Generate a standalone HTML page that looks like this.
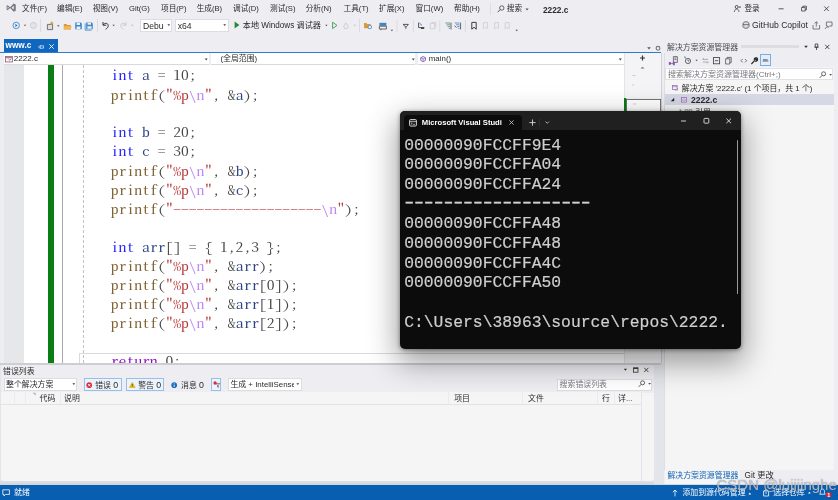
<!DOCTYPE html>
<html lang="zh-CN">
<head>
<meta charset="utf-8">
<title>2222.c - Microsoft Visual Studio</title>
<style>
*{box-sizing:border-box;margin:0;padding:0}
html,body{width:838px;height:500px;overflow:hidden;background:#eeeef2}
body{position:relative;font-family:"Liberation Sans","Noto Sans CJK SC",sans-serif;font-size:7.9px;color:#2b2b2b;line-height:1}
#root{position:absolute;left:-3px;top:-3px;width:844px;height:506px;overflow:hidden;background:#eeeef2;filter:blur(.38px)}
#in{position:absolute;left:3px;top:3px;width:838px;height:500px}
.a{position:absolute;white-space:nowrap}
.t{position:absolute;white-space:nowrap;line-height:12px;height:12px}
svg{position:absolute;overflow:visible}
/* code */
#code{position:absolute;left:110.8px;top:65.8px;transform:scaleY(.8);transform-origin:0 0;font-family:"Noto Serif CJK SC","Liberation Serif",serif;font-feature-settings:"hwid";font-size:15.6px;line-height:23.81px;color:#444;white-space:pre}
#code .k{color:#2222ff}
#code .f{color:#806232}
#code .s{color:#b83838}
#code .e{color:#bd88f6}
#code .v{color:#2c4484}
#code .r{color:#8f08c4}
/* console */
#con{position:absolute;left:400px;top:110.5px;width:340.5px;height:238px;background:#0c0c0c;border-radius:5px;box-shadow:0 11px 30px 3px rgba(0,0,0,.38),0 1px 4px rgba(0,0,0,.45);overflow:hidden}
#con pre{position:absolute;left:4.2px;top:25.3px;-webkit-text-stroke:.18px #cfcfcf;font-family:"Liberation Mono","DejaVu Sans Mono",monospace;font-size:16.35px;line-height:19.65px;color:#cfcfcf;white-space:pre}
#menubar .t{font-size:7.65px}
#con .d{display:inline-block;transform:scaleX(1.47);transform-origin:0 50%;letter-spacing:-3.137px;position:relative;top:-1.6px;left:-2.3px;-webkit-text-stroke:.5px #cfcfcf}
</style>
</head>
<body>
<div id="root"><div id="in">

<!-- MENUBAR -->
<div id="menubar">
 <svg style="left:5.6px;top:3px" width="10.4" height="9.4" viewBox="0 0 10.4 9.4"><path d="M.6 2.6L1.6 2.2 4.2 4.3 7.6 .6 9.8 1.6V7.8L7.6 8.8 4.2 5.1 1.6 7.2 .6 6.8zM1.6 3.6v2.2l1.3-1.1zM5.6 4.7l2.2 1.9V2.8z" fill="#7b7b86" fill-rule="evenodd"/></svg>
 <div class="t" style="left:22px;top:3.3px">文件(F)</div>
 <div class="t" style="left:57px;top:3.3px">编辑(E)</div>
 <div class="t" style="left:92.7px;top:3.3px">视图(V)</div>
 <div class="t" style="left:129px;top:3.3px">Git(G)</div>
 <div class="t" style="left:161px;top:3.3px">项目(P)</div>
 <div class="t" style="left:196.7px;top:3.3px">生成(B)</div>
 <div class="t" style="left:233px;top:3.3px">调试(D)</div>
 <div class="t" style="left:270px;top:3.3px">测试(S)</div>
 <div class="t" style="left:305.7px;top:3.3px">分析(N)</div>
 <div class="t" style="left:343.6px;top:3.3px">工具(T)</div>
 <div class="t" style="left:379px;top:3.3px">扩展(X)</div>
 <div class="t" style="left:415.6px;top:3.3px">窗口(W)</div>
 <div class="t" style="left:454px;top:3.3px">帮助(H)</div>
 <div class="a" style="left:490.4px;top:3.4px;width:1px;height:11.6px;background:#dcdce2"></div>
 <svg style="left:496.5px;top:5px" width="8" height="8" viewBox="0 0 8 8"><circle cx="4.8" cy="3" r="2.2" fill="none" stroke="#444" stroke-width=".8"/><path d="M3.2 4.6L.6 7.2" stroke="#444" stroke-width=".9"/></svg>
 <div class="t" style="left:506.8px;top:3.3px">搜索</div>
 <svg style="left:524.8px;top:8px" width="4" height="3" viewBox="0 0 4 3"><path d="M.4 .4h3.2L2 2.4z" fill="#555"/></svg>
 <div class="t" style="left:543px;top:3.8px;font-weight:bold;font-size:8.3px">2222.c</div>
 <svg style="left:734.4px;top:4.6px" width="7" height="7.6" viewBox="0 0 7 7.6"><circle cx="2.7" cy="2" r="1.5" fill="none" stroke="#333" stroke-width=".8"/><path d="M.4 7c0-2 1-2.9 2.3-2.9S5 5 5 7M5.2 1.4l1.4 1.4M6.6 1.4L5.2 2.8" fill="none" stroke="#333" stroke-width=".7"/></svg>
 <div class="t" style="left:744.4px;top:3.3px">登录</div>
 <svg style="left:776px;top:4px" width="56" height="10" viewBox="0 0 56 10"><path d="M2.6 4.8h5" stroke="#333" stroke-width=".8"/><path d="M25.6 3.4h3.6v3.6h-3.6zM26.8 3.4V2.2h3.6v3.6h-1.2" fill="none" stroke="#333" stroke-width=".75"/><path d="M48.2 2.4l4.6 4.6M52.8 2.4l-4.6 4.6" stroke="#333" stroke-width=".8" fill="none"/></svg>
</div>

<!-- TOOLBAR -->
<div id="toolbar">
 <!-- nav back / forward -->
 <svg style="left:11px;top:20px" width="30" height="11" viewBox="0 0 30 11"><circle cx="5.2" cy="5.4" r="3.2" fill="#e9f2fb" stroke="#3f86c7" stroke-width=".9"/><path d="M4.4 3.8l2.2 1.6-2.2 1.6z" fill="#2f6fae"/><path d="M12.8 4.8h2.4l-1.2 1.5z" fill="#555"/><circle cx="22.4" cy="5.4" r="3" fill="#e4e4e8" stroke="#c4c4ca" stroke-width=".8"/></svg>
 <div class="a" style="left:40.4px;top:19.4px;width:1px;height:12.4px;background:#dadae0"></div>
 <!-- new, open, save, save all -->
 <svg style="left:45px;top:19.6px" width="52" height="12" viewBox="0 0 52 12"><path d="M2.4 4.4h5.2v5.2H2.4z" fill="#ddd" stroke="#666" stroke-width=".9"/><path d="M6.8 1l.7 1.5 1.5.6-1.5.7-.7 1.5-.7-1.5-1.5-.7 1.5-.6z" fill="#c8a51a"/><path d="M12 5.2h2.6l-1.3 1.6z" fill="#555"/><path d="M18.8 4h2.6l.8.9h3.6v4.5h-7z" fill="#dc9a3c"/><path d="M19.4 6.2h7.2l-1 3.2h-6.8z" fill="#f0b85c"/><path d="M30.2 2.4h5.6l1 1v5.8h-6.6z" fill="#3f86c7"/><path d="M31.6 2.8h3.4v2.2h-3.4zM31.6 6.6h3.8v2.4h-3.8z" fill="#e9f2fb"/><path d="M41.2 2.4h5.6l1 1v5.8h-6.6z" fill="#3f86c7"/><path d="M42.6 2.8h3.4v2h-3.4zM42.4 6.2h4.2v2.6h-4.2z" fill="#e9f2fb"/><path d="M40.2 3.4v6.8h6.4" fill="none" stroke="#3f86c7" stroke-width=".8"/></svg>
 <div class="a" style="left:96.6px;top:19.4px;width:1px;height:12.4px;background:#dadae0"></div>
 <!-- undo / redo -->
 <svg style="left:100px;top:20px" width="36" height="11" viewBox="0 0 36 11"><path d="M3 2v3.2h3.2M3.2 5c1-2 4.6-2.6 5 .4.2 1.800-1.200 3-2.600 3.800" fill="none" stroke="#333" stroke-width="1"/><path d="M12.400 4.800h2.400l-1.200 1.500z" fill="#555"/><path d="M26 2v3.200h-3.200M25.800 5c-1-2-4.600-2.600-5 .4-.2 1.800 1.200 3 2.600 3.800" fill="none" stroke="#c9c9cf" stroke-width="1"/><path d="M31 4.800h2.400l-1.200 1.500z" fill="#b9b9c0"/></svg>
 <!-- combos -->
 <div class="a" style="left:140.400px;top:19.400px;width:31.800px;height:12.800px;background:#fff;border:1px solid #dcdce2"></div>
 <div class="t" style="left:143px;top:19.800px;font-size:8.600px;width:21.200px;overflow:hidden">Debug</div>
 <div class="a" style="left:175px;top:19.400px;width:53.600px;height:12.800px;background:#fff;border:1px solid #dcdce2"></div>
 <div class="t" style="left:177.800px;top:19.800px;font-size:8.600px">x64</div>
 <svg style="left:166px;top:24.400px" width="62" height="3" viewBox="0 0 62 3"><path d="M1.400 .3h2.800l-1.400 1.800zM57.300 .3h2.800l-1.400 1.800z" fill="#444"/></svg>
 <!-- start -->
 <svg style="left:233.800px;top:21.400px" width="6" height="8" viewBox="0 0 6 8"><path d="M.6 .6l4.800 3.400-4.800 3.400z" fill="#1f8a3b"/></svg>
 <div class="t" style="left:242.800px;top:19.600px;font-size:8.150px">本地 Windows 调试器</div>
 <svg style="left:323.600px;top:20px" width="36" height="11" viewBox="0 0 36 11"><path d="M1.200 4.800h2.400l-1.200 1.500z" fill="#555"/><path d="M8.600 2.200l4.400 3.200-4.400 3.200z" fill="none" stroke="#3c9a55" stroke-width=".9"/><path d="M22 8.600c-1.800 0-2.600-1.400-2-2.800.4-.9 1.400-1.200 1.400-2.600 1.400.6 2.600 2 2.600 3.400 0 1.200-.8 2-2 2z" fill="none" stroke="#c2c2c8" stroke-width=".9"/><path d="M29.500 4.800h2.400l-1.200 1.500z" fill="#b9b9c0"/></svg>
 <div class="a" style="left:359.400px;top:19.400px;width:1px;height:12.400px;background:#dadae0"></div>
 <svg style="left:362px;top:19.600px" width="160" height="14" viewBox="0 0 160 14"><path d="M2 3h2.400l.8.900h3.400v4.400H2z" fill="#dc9a3c"/><circle cx="7.800" cy="7" r="1.800" fill="#eef" stroke="#3f86c7" stroke-width=".8"/><path d="M17.400 2.800h7v3h-7z" fill="#3f86c7"/><path d="M17.400 6.200h7v2.800h-7zM19 9v1.200" fill="none" stroke="#444" stroke-width=".8"/><path d="M28.600 9.800h2.600l-1.300 1.500z" fill="#555"/><path d="M35 0v12.400" stroke="#dadae0" stroke-width="1"/><path d="M41 4.400h5.600M41.800 4.400c0 3 4 3 4 0M43.800 6.800v2" fill="none" stroke="#444" stroke-width=".9"/><path d="M51.400 0v12.400" stroke="#dadae0" stroke-width="1"/><path d="M56.600 2.600v5h5.600" fill="none" stroke="#444" stroke-width=".9"/><path d="M57.400 3l2.600 2.400" stroke="#3f86c7" stroke-width="1"/><path d="M59 7.200h3.200v1.800h-3.200z" fill="#444"/><path d="M68.200 3.400h4.400v5.400h-4.400zM69.400 2.400h4.400v5.400" fill="none" stroke="#c9c9cf" stroke-width=".8"/><path d="M77.800 0v12.400" stroke="#dadae0" stroke-width="1"/><path d="M83.400 3h4.800M84.600 4.800h3.600M85.600 6.600h2.600M86.800 8.400h1.400" stroke="#4a8a7a" stroke-width=".8"/><path d="M89 2.600v6.800" stroke="#444" stroke-width=".8"/><path d="M92.800 3h4.800M94 4.800h3.600M95 6.600h2.600M96.200 8.400h1.400" stroke="#3f86c7" stroke-width=".8"/><path d="M98.600 2.600v6.800M92.600 5.600l1.800 2" stroke="#444" stroke-width=".8"/><path d="M103.400 0v12.400" stroke="#dadae0" stroke-width="1"/><path d="M109.800 2.400h4.400v6.800l-2.200-1.900-2.200 1.900z" fill="none" stroke="#333" stroke-width=".95"/><path d="M121.400 2.600h4v6.200l-2-1.700-2 1.700zM132.600 2.600h4v6.200l-2-1.700-2 1.700zM143.200 2.600h4v6.200l-2-1.700-2 1.700z" fill="none" stroke="#cfcfd5" stroke-width=".9"/><path d="M153.400 9.800h2.600l-1.300 1.500z" fill="#555"/></svg>
 <!-- copilot -->
 <svg style="left:741.600px;top:21px" width="8" height="8" viewBox="0 0 8 8"><path d="M1 3.200c0-1.600 1.200-2.400 3-2.400s3 .8 3 2.400v2.200c0 1-1.400 1.800-3 1.800s-3-.8-3-1.800z" fill="none" stroke="#444" stroke-width=".8"/><path d="M2.800 4.400v1M5.200 4.400v1M1 3.400h6" stroke="#444" stroke-width=".7"/></svg>
 <div class="t" style="left:752px;top:19.200px;font-size:8.600px">GitHub Copilot</div>
 <svg style="left:811.600px;top:20.600px" width="22" height="9" viewBox="0 0 22 9"><path d="M1 4v4h6.600V4M4.300 5.600V.8M2.600 2.400L4.300 .8 6 2.400" fill="none" stroke="#555" stroke-width=".75"/><path d="M14.400 1h5.600v4h-2.400l-1.800 1.600V5h-1.400z" fill="none" stroke="#555" stroke-width=".75"/><path d="M13.400 8c0-1.200.6-1.800 1.600-1.800" fill="none" stroke="#555" stroke-width=".7"/></svg>
</div>

<!-- EDITOR -->
<div id="editor">
 <!-- tab -->
 <div class="a" style="left:3.8px;top:39.3px;width:54.2px;height:13.4px;background:#1067bf"></div>
 <div class="t" style="left:5.6px;top:40.4px;color:#fff;font-weight:bold;font-size:8.2px">www.c</div>
 <svg style="left:37.5px;top:43.5px" width="6" height="6" viewBox="0 0 6 6"><path d="M0 3h2.2M2.2 1v4M2.2 1.8h3.3v2.4h-3.3" fill="none" stroke="#cfe3f7" stroke-width=".8"/></svg>
 <svg style="left:48.5px;top:43.8px" width="5" height="5" viewBox="0 0 5 5"><path d="M.3 .3l4.4 4.4M4.7 .3L.3 4.7" stroke="#fff" stroke-width=".9" fill="none"/></svg>
 <svg style="left:646px;top:45.5px" width="16" height="5" viewBox="0 0 16 5"><path d="M1.2 1.2h3.6l-1.8 2.2z" fill="#555"/><circle cx="12" cy="2.3" r="1.9" fill="none" stroke="#777" stroke-width="1.1"/></svg>
 <!-- blue line -->
 <div class="a" style="left:-3px;top:52.2px;width:664px;height:1px;background:#2b7bd0"></div>
 <!-- nav bar -->
 <div class="a" style="left:3.8px;top:53.2px;width:620.2px;height:11.6px;background:#fff;border-bottom:1px solid #d8d8de"></div>
 <div class="a" style="left:208.6px;top:53.2px;width:2.6px;height:11.6px;background:#eeeef2"></div>
 <div class="a" style="left:415.4px;top:53.2px;width:2.6px;height:11.6px;background:#eeeef2"></div>
 <svg style="left:5px;top:56.2px" width="8" height="6.4" viewBox="0 0 8 6.4"><rect x=".4" y=".4" width="7.2" height="5.6" fill="#fbeff4" stroke="#8d5a7a" stroke-width=".8"/><path d="M1 1.7h6" stroke="#8d5a7a" stroke-width=".9"/><path d="M3.6 3.2l1.2 1 1.4-1.4" stroke="#555" stroke-width=".7" fill="none"/></svg>
 <div class="t" style="left:13.8px;top:53.3px;font-size:8.05px">2222.c</div>
 <div class="t" style="left:220.4px;top:53.3px;font-size:7.9px">(全局范围)</div>
 <svg style="left:419.8px;top:56px" width="6.2" height="6.2" viewBox="0 0 6.5 6.5"><path d="M3.25 .5l2.5 1.3v2.9l-2.5 1.3-2.5-1.3v-2.9z" fill="#f3eafa" stroke="#7a4aa8" stroke-width=".8"/><path d="M.9 1.9l2.35 1.2 2.35-1.2M3.25 3.1v2.7" stroke="#7a4aa8" stroke-width=".6" fill="none"/></svg>
 <div class="t" style="left:428.8px;top:53.3px;font-size:7.9px">main()</div>
 <svg style="left:0;top:58px" width="630" height="4" viewBox="0 0 630 4"><path d="M204.7 .6h3l-1.5 1.8zM411.8 .6h3l-1.5 1.8zM618.8 .6h3l-1.5 1.8z" fill="#444"/></svg>
 <!-- editor body -->
 <div class="a" style="left:3.6px;top:65px;width:657.6px;height:297.9px;background:#fff"></div>
 <div class="a" style="left:3.6px;top:65px;width:20.2px;height:297.9px;background:#e6e7e8"></div>
 <div class="a" style="left:48.4px;top:65px;width:5.6px;height:297.9px;background:#0a7d14"></div>
 <div class="a" style="left:62.2px;top:65px;width:1px;height:297.9px;background:#a9a9ad"></div>
 <div class="a" style="left:82.8px;top:65px;width:0;height:297.9px;border-left:1px dashed #c2c2c6"></div>
 <div class="a" style="left:78.6px;top:352.8px;width:545.4px;height:10.1px;border:1.3px solid #dadade;border-right:0;border-bottom:0"></div>
 <!-- scrollbar (map mode) -->
 <div class="a" style="left:624px;top:53.2px;width:37.2px;height:309.7px;background:#f4f4f6;border-left:1px solid #e4e4e8"></div>
 <div class="a" style="left:660.6px;top:53.2px;width:1px;height:309.7px;background:#cfcfd6"></div>
 <svg style="left:624px;top:53px" width="37" height="60" viewBox="0 0 37 60"><path d="M16 5h5M18.5 2.5v5" stroke="#333" stroke-width="1.2"/><path d="M16.5 15.6l2-1.8 2 1.8z" fill="#777"/><rect x="2.4" y="46.4" width="34.2" height="20" fill="#fff" stroke="#5e5e62" stroke-width=".9"/><rect x="0" y="45" width="2.2" height="21" fill="#0a7d14"/><path d="M8.4 22.6h3M8 32h2.2M9 51h3" stroke="#c4b4ba" stroke-width=".7"/></svg>
 <pre id="code"><span class="k">int</span> <span class="v">a</span> = 10;
<span class="f">printf</span>(<span class="s">"%p<span class="e">\n</span>"</span>, &amp;<span class="v">a</span>);

<span class="k">int</span> <span class="v">b</span> = 20;
<span class="k">int</span> <span class="v">c</span> = 30;
<span class="f">printf</span>(<span class="s">"%p<span class="e">\n</span>"</span>, &amp;<span class="v">b</span>);
<span class="f">printf</span>(<span class="s">"%p<span class="e">\n</span>"</span>, &amp;<span class="v">c</span>);
<span class="f">printf</span>(<span class="s">"-------------------<span class="e">\n</span>"</span>);

<span class="k">int</span> <span class="v">arr</span>[] = { 1,2,3 };
<span class="f">printf</span>(<span class="s">"%p<span class="e">\n</span>"</span>, &amp;<span class="v">arr</span>);
<span class="f">printf</span>(<span class="s">"%p<span class="e">\n</span>"</span>, &amp;<span class="v">arr</span>[0]);
<span class="f">printf</span>(<span class="s">"%p<span class="e">\n</span>"</span>, &amp;<span class="v">arr</span>[1]);
<span class="f">printf</span>(<span class="s">"%p<span class="e">\n</span>"</span>, &amp;<span class="v">arr</span>[2]);

<span class="r">return</span> 0;</pre>
</div>

<!-- SOLUTION EXPLORER -->
<div id="solexp">
 <div class="a" style="left:664.200px;top:40px;width:170px;height:443.600px;background:#f5f5f5;border-radius:3.500px 3.500px 0 0;border-left:1px solid #dedee4"></div>
 <div class="a" style="left:664.200px;top:40px;width:170px;height:13.400px;background:#eeeef2;border-radius:3.500px 3.500px 0 0"></div>
 <div class="t" style="left:667px;top:41.500px;color:#4a4a4e">解决方案资源管理器</div>
 <div class="a" style="left:741px;top:45px;width:58px;height:2.600px;background:#dcdce2"></div>
 <svg style="left:803px;top:42.600px" width="28" height="8" viewBox="0 0 28 8"><path d="M1.200 2.800h3.600l-1.800 2.200z" fill="#333"/><path d="M12.200 1h2.600v3.200h-2.600zM11.400 4.200h4.200M13.500 4.200v2.800" fill="none" stroke="#333" stroke-width=".8"/><path d="M22.200 1.800l4.200 4.200M26.400 1.800l-4.200 4.200" stroke="#333" stroke-width=".85" fill="none"/></svg>
 <!-- toolbar -->
 <div class="a" style="left:665px;top:53.400px;width:169px;height:14px;background:#eeeef2"></div>
 <div class="a" style="left:760px;top:54px;width:11.200px;height:12.400px;background:#e4eefa;border:1px solid #78aee6"></div>
 <svg style="left:668px;top:54.600px" width="106" height="11" viewBox="0 0 106 11"><path d="M5.400 1.600h4v5.800h-4zM6.400 3h2M6.400 4.600h2" fill="none" stroke="#555" stroke-width=".8"/><path d="M.8 7.400L2 6.800l2 1.600 1.800-2 1 .5v3l-1 .5-1.800-2-2 1.600-1.200-.6z" fill="#8a4fb5"/><circle cx="20" cy="6" r="2.600" fill="none" stroke="#444" stroke-width=".8"/><path d="M20 4.600V6h1.300M16.600 2.400l1.400 1" stroke="#444" stroke-width=".7" fill="none"/><path d="M16.200 1.400l1.800.3-1.200 1.300z" fill="#3f86c7"/><path d="M27.400 4.800h2.400l-1.200 1.500z" fill="#555"/><path d="M34.600 4.400h5.400M34.600 4.400l1.400-1.400M40.400 7h-5.400M40.400 7l-1.400 1.400" stroke="#9a9aa2" stroke-width=".8" fill="none"/><rect x="45.400" y="2.600" width="6.200" height="6.200" fill="none" stroke="#444" stroke-width=".85"/><path d="M46.800 5.700h3.400" stroke="#444" stroke-width=".85"/><path d="M57.600 3.800h4.200v5.200h-4.200zM59 3.800V2.400h4.200v5.200h-1.400" fill="none" stroke="#555" stroke-width=".8"/><path d="M74.600 4l-1.600 1.700 1.600 1.700M77 4l1.600 1.700-1.600 1.700" stroke="#555" stroke-width=".8" fill="none"/><path d="M83.400 9l3.400-3.600M86.400 5.400c-.6-1.400.4-3 2.200-2.600l-1.200 1.300.9.900 1.300-1.200c.4 1.800-1.200 2.800-2.600 2.200" stroke="#222" stroke-width="1.100" fill="none"/><path d="M94.600 6h5.800M95 4.800h4.600" stroke="#555" stroke-width=".9"/></svg>
 <!-- search -->
 <div class="a" style="left:665.400px;top:68.200px;width:167.400px;height:12px;background:#fff;border:1px solid #e0e0e6"></div>
 <div class="t" style="left:668px;top:68.600px;color:#77777d;font-size:8px">搜索解决方案资源管理器(Ctrl+;)</div>
 <svg style="left:818.600px;top:70.600px" width="14" height="8" viewBox="0 0 14 8"><circle cx="4.600" cy="2.800" r="2" fill="none" stroke="#444" stroke-width=".8"/><path d="M3.200 4.300L.8 6.800" stroke="#444" stroke-width=".9"/><path d="M10.200 3h2.800l-1.400 1.700z" fill="#555"/></svg>
 <!-- tree -->
 <svg style="left:672.400px;top:84.600px" width="6" height="6" viewBox="0 0 8 8"><rect x=".8" y=".8" width="6" height="5.400" fill="#f6effa" stroke="#8a62a8" stroke-width=".9"/><path d="M.8 2.200h6" stroke="#8a62a8" stroke-width=".8"/><path d="M3.600 6.800h3.800v-3" fill="none" stroke="#777" stroke-width=".7"/></svg>
 <div class="t" style="left:681.800px;top:82.600px">解决方案 '2222.c' (1 个项目，共 1 个)</div>
 <div class="a" style="left:665.200px;top:94px;width:169px;height:11px;background:#d6d8e6"></div>
 <svg style="left:669.600px;top:97.400px" width="5" height="5" viewBox="0 0 5 5"><path d="M4.200 .8v3.400H.8z" fill="#222"/></svg>
 <svg style="left:681px;top:96.600px" width="6" height="6" viewBox="0 0 8 8"><rect x=".8" y=".8" width="6.400" height="6" fill="#f6effa" stroke="#8a62a8" stroke-width=".9"/><path d="M2.400 2.600h3.200v2.600h-3.200z" fill="none" stroke="#8a62a8" stroke-width=".7"/></svg>
 <div class="t" style="left:691px;top:93.600px;font-weight:bold;font-size:8.600px">2222.c</div>
 <svg style="left:678.600px;top:109.400px" width="14" height="6" viewBox="0 0 14 6"><path d="M1 .6l2.600 2.400-2.600 2.400z" fill="none" stroke="#555" stroke-width=".7"/><path d="M6 .800h2.800v2.800h-2.800zM10 .800h2.800v2.800h-2.800z" fill="none" stroke="#666" stroke-width=".7"/></svg>
 <div class="t" style="left:695px;top:107.200px">引用</div>
 <!-- bottom tabs -->
 <div class="a" style="left:664.200px;top:469.600px;width:170px;height:14px;background:#eeeef2"></div>
 <div class="a" style="left:665.200px;top:469.600px;width:75px;height:14px;background:#f5f5f5"></div>
 <div class="t" style="left:667.400px;top:470.400px;color:#0f62b5">解决方案资源管理器</div>
 <div class="t" style="left:744.600px;top:470.400px;font-size:8.200px">Git 更改</div>
</div>

<!-- ERROR LIST -->
<div id="errlist">
 <div class="a" style="left:-3px;top:362.900px;width:667px;height:122.600px;background:#e3e5ea"></div>
 <div class="a" style="left:-3px;top:362.900px;width:664px;height:1.700px;background:#cdcdd2"></div>
 <div class="a" style="left:1.400px;top:364.600px;width:652.200px;height:116.800px;background:#f5f5f5;border-radius:3.500px"></div>
 <div class="a" style="left:1.400px;top:364.600px;width:652.200px;height:28px;background:#eeeef2;border-radius:3.500px 3.500px 0 0"></div>
 <div class="t" style="left:3px;top:366px">错误列表</div>
 <svg style="left:621px;top:366px" width="30" height="8" viewBox="0 0 30 8"><path d="M2.800 2.800h3.200l-1.600 2z" fill="#333"/><rect x="12.400" y="1.800" width="4.600" height="4.400" fill="none" stroke="#333" stroke-width=".8"/><path d="M12.400 2.400h4.600" stroke="#333" stroke-width="1"/><path d="M23.200 1.800l4.200 4.200M27.400 1.800l-4.200 4.200" stroke="#333" stroke-width=".85" fill="none"/></svg>
 <!-- toolbar -->
 <div class="a" style="left:3.800px;top:377.600px;width:73.600px;height:13.200px;background:#fff;border:1px solid #dcdce2"></div>
 <div class="t" style="left:6px;top:379.400px">整个解决方案</div>
 <svg style="left:72.200px;top:383px" width="4" height="3" viewBox="0 0 4 3"><path d="M.4 .3h2.800l-1.400 1.800z" fill="#444"/></svg>
 <div class="a" style="left:84px;top:377.600px;width:37.600px;height:13.200px;background:#edf3fb;border:1px solid #96bfea"></div>
 <svg style="left:85.500px;top:381.700px" width="6.400" height="6.400" viewBox="0 0 7 7"><circle cx="3.500" cy="3.500" r="3.100" fill="#d8303c"/><path d="M2.200 2.200l2.600 2.600M4.800 2.200L2.200 4.800" stroke="#fff" stroke-width=".9"/></svg>
 <div class="t" style="left:95.200px;top:379.400px">错误 <span style="font-size:8.8px">0</span></div>
 <div class="a" style="left:126px;top:377.600px;width:38.400px;height:13.200px;background:#edf3fb;border:1px solid #96bfea"></div>
 <svg style="left:128.800px;top:382px" width="6.600" height="5.800" viewBox="0 0 8 7"><path d="M4 .4l3.600 6.200H.4z" fill="#f2c21a" stroke="#b8900c" stroke-width=".5"/><path d="M4 2.400v2.200M4 5.200v.7" stroke="#222" stroke-width=".8"/></svg>
 <div class="t" style="left:138.200px;top:379.400px">警告 <span style="font-size:8.8px">0</span></div>
 <svg style="left:170.900px;top:381.700px" width="6.400" height="6.400" viewBox="0 0 7 7"><circle cx="3.500" cy="3.500" r="3.100" fill="#1b6fc0"/><path d="M3.500 3v2.400M3.500 1.600v.8" stroke="#fff" stroke-width=".9"/></svg>
 <div class="t" style="left:181px;top:379.400px">消息 <span style="font-size:8.8px">0</span></div>
 <div class="a" style="left:211.300px;top:377.800px;width:10px;height:13px;background:#edf3fb;border:1px solid #96bfea"></div>
 <svg style="left:212.800px;top:380.800px" width="7.400" height="7.400" viewBox="0 0 8 8"><circle cx="2.200" cy="2.200" r="1.800" fill="#d8303c"/><path d="M3.400 2.600h4l-1.600 2v2.400l-.9-.6V4.600z" fill="none" stroke="#555" stroke-width=".7"/></svg>
 <div class="a" style="left:227.800px;top:377.600px;width:74px;height:13.200px;background:#fff;border:1px solid #dcdce2"></div>
 <div class="t" style="left:230.400px;top:379.400px;width:63.200px;overflow:hidden">生成 + IntelliSense</div>
 <svg style="left:296.400px;top:383px" width="4" height="3" viewBox="0 0 4 3"><path d="M.4 .3h2.800l-1.400 1.800z" fill="#444"/></svg>
 <div class="a" style="left:557px;top:379.400px;width:95.400px;height:12px;background:#fff;border:1px solid #dcdce2"></div>
 <div class="t" style="left:559.600px;top:379.400px;color:#7a7a80">搜索错误列表</div>
 <svg style="left:638.200px;top:380.400px" width="14" height="8" viewBox="0 0 14 8"><circle cx="4.600" cy="2.800" r="2" fill="none" stroke="#444" stroke-width=".8"/><path d="M3.200 4.300L.8 6.800" stroke="#444" stroke-width=".9"/><path d="M10.200 3h2.800l-1.400 1.700z" fill="#555"/></svg>
 <!-- header -->
 <div class="a" style="left:1.400px;top:392.400px;width:640px;height:12.400px;background:#f5f5f5;border-bottom:1px solid #e2e2e8"></div>
 <div class="a" style="left:641.400px;top:392.400px;width:1px;height:89px;background:#e4e4ea"></div>
 <svg style="left:0;top:392.400px" width="660" height="12" viewBox="0 0 660 12"><path d="M14.500 0v12M25.500 0v12M60.500 0v12M448.500 0v12M522.500 0v12M597.500 0v12M614.500 0v12" stroke="#ebebef" stroke-width="1"/><path d="M32.600 .8h3v3z" fill="#b4b4bc"/></svg>
 <div class="t" style="left:39.600px;top:392.900px">代码</div>
 <div class="t" style="left:64px;top:392.900px">说明</div>
 <div class="t" style="left:454.200px;top:392.900px">项目</div>
 <div class="t" style="left:528px;top:392.900px">文件</div>
 <div class="t" style="left:602px;top:392.900px">行</div>
 <div class="t" style="left:618px;top:392.900px">详...</div>
</div>

<!-- STATUS BAR -->
<div id="status">
 <div class="a" style="left:-3px;top:485.400px;width:844px;height:17.600px;background:#085eb1"></div>
 <div class="a" style="left:-3px;top:481.400px;width:657px;height:4px;background:linear-gradient(#dfe1e6,#d0d4d9)"></div>
 <div class="a" style="left:654px;top:483.600px;width:187px;height:1.800px;background:#d6d9de"></div>
 <svg style="left:2px;top:488.600px" width="9" height="8" viewBox="0 0 9 8"><path d="M.8 .8h6.600v4.600H3.600L2 7V5.400H.8z" fill="none" stroke="#fff" stroke-width=".8"/></svg>
 <div class="t" style="left:14px;top:487.300px;color:#fff">就绪</div>
 <svg style="left:671px;top:488.600px" width="8" height="8" viewBox="0 0 8 8"><path d="M4 7.400V1M1.800 3.200L4 1l2.200 2.200" fill="none" stroke="#fff" stroke-width=".8"/></svg>
 <div class="t" style="left:682.400px;top:487.300px;color:#fff">添加到源代码管理</div>
 <svg style="left:748px;top:488.600px" width="24" height="8" viewBox="0 0 24 8"><path d="M.4 5.400h2.800L1.800 3.600z" fill="#fff"/><path d="M15.600 2h5v5h-5zM16.800 2V1h2.600v1M17.200 4h1.800" fill="none" stroke="#fff" stroke-width=".8"/></svg>
 <div class="t" style="left:773.300px;top:487.300px;color:#fff">选择仓库</div>
 <svg style="left:807px;top:487.400px" width="30" height="11" viewBox="0 0 30 11"><path d="M1 6.600h2.800L2.400 4.800z" fill="#fff"/><path d="M12.600 7.200c1-.8.8-2 .8-3 0-1.400.9-2.200 2-2.200s2 .8 2 2.200c0 1 0 2.200.8 3z" fill="none" stroke="#fff" stroke-width=".8"/><circle cx="21.600" cy="7.800" r="2.700" fill="#e0232e"/></svg>
 <div class="t" style="left:827.200px;top:489.200px;color:#fff;font-size:5.500px;font-weight:bold">1</div>
 <div class="t" style="left:716.500px;top:474.200px;height:22px;line-height:22px;font-size:15px;color:rgba(255,255,255,.58);text-shadow:0 0 1.300px rgba(80,80,95,.55),0 0 .5px rgba(70,70,85,.5)">CSDN @lujijinghe</div>
</div>

<!-- CONSOLE -->
<div id="con">
 <div class="a" style="left:0;top:0;width:341px;height:19.2px;background:#202020"></div>
 <div class="a" style="left:4px;top:4.6px;width:118px;height:15px;background:#0c0c0c;border-radius:3.5px 3.5px 0 0"></div>
 <svg style="left:9px;top:8.6px" width="8" height="7.6" viewBox="0 0 8 7.6"><rect x=".5" y=".5" width="7" height="6.6" rx="1.2" fill="#2a2a2a" stroke="#d6d6d6" stroke-width=".9"/><path d="M.6 2.4h6.8" stroke="#d6d6d6" stroke-width=".7"/><path d="M2 3.6l1.2 .9-1.2 .9M4.2 5.6h1.8" stroke="#d6d6d6" stroke-width=".6" fill="none"/></svg>
 <div class="t" style="left:21.8px;top:6.3px;color:#fff;font-weight:bold;font-size:7.65px">Microsoft Visual Studi</div>
 <svg style="left:109px;top:9.4px" width="5" height="5" viewBox="0 0 5 5"><path d="M.4 .4l4.2 4.2M4.6 .4L.4 4.6" stroke="#d0d0d0" stroke-width=".8" fill="none"/></svg>
 <svg style="left:129px;top:8.6px" width="24" height="8" viewBox="0 0 24 8"><path d="M.4 3.6h6.2M3.5 .5v6.2" stroke="#d8d8d8" stroke-width=".9" fill="none"/><path d="M10.4 0v7.4" stroke="#3a3a3a" stroke-width=".7"/><path d="M16.6 2.6l1.7 1.7 1.7-1.7" stroke="#d0d0d0" stroke-width=".8" fill="none"/></svg>
 <svg style="left:280px;top:6.4px" width="54" height="8" viewBox="0 0 54 8"><path d="M1 4h5" stroke="#e0e0e0" stroke-width=".9"/><rect x="24" y="1.4" width="4.8" height="4.8" rx=".8" fill="none" stroke="#e0e0e0" stroke-width=".9"/><path d="M46.4 1.6l4.6 4.6M51 1.6l-4.6 4.6" stroke="#e8e8e8" stroke-width=".9" fill="none"/></svg>
 <div class="a" style="left:336.6px;top:29px;width:1.3px;height:154px;background:#9a9a9a;border-radius:1px"></div>
<pre>00000090FCCFF9E4
00000090FCCFFA04
00000090FCCFFA24
<span class="d">-------------------</span>
00000090FCCFFA48
00000090FCCFFA48
00000090FCCFFA4C
00000090FCCFFA50

C:\Users\38963\source\repos\2222.</pre>
</div>

</div></div>
</body>
</html>
